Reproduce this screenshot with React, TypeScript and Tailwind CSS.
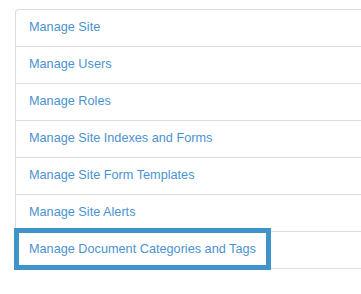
import React from "react";

const items = [
  "Manage Site",
  "Manage Users",
  "Manage Roles",
  "Manage Site Indexes and Forms",
  "Manage Site Form Templates",
  "Manage Site Alerts",
  "Manage Document Categories and Tags",
];

export default function App() {
  return (
    <div className="w-[361px] h-[294px] bg-white overflow-hidden pt-[9px] pl-[15px]" style={{ fontFamily: '"Liberation Sans", Arial, sans-serif' }}>
      <div className="w-[400px] border border-[#dddddd] rounded-tl-[4px] border-r-0">
        {items.map((t, i) => (
          <div
            key={t}
            className={`relative flex items-center pl-[13px] text-[12.7px] text-[#4a93d0] ${i > 0 ? "h-[37px] border-t border-[#dddddd]" : "h-[36px]"}`}
          >
            {t}
            {i === items.length - 1 && (
              <div className="absolute left-[-2px] top-[-4px] w-[257px] h-[42px] border-[5px] border-[#3f95c9]" />
            )}
          </div>
        ))}
      </div>
    </div>
  );
}
